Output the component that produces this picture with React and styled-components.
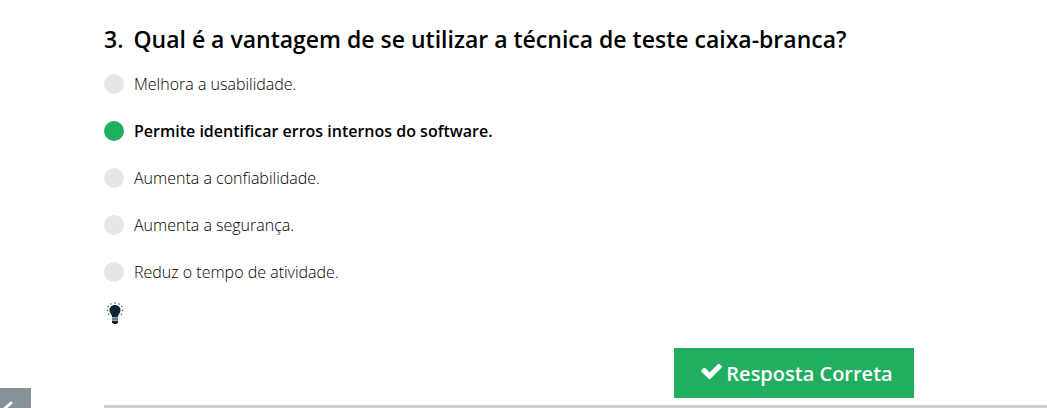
import React, { useState } from "react";
import styled, { createGlobalStyle } from "styled-components";

const GlobalStyle = createGlobalStyle`
  * { box-sizing: border-box; }
  body {
    margin: 0;
    background: #fff;
    color: #000;
    font-family: "Open Sans", "Liberation Sans", sans-serif;
    overflow: hidden;
  }
`;

const Page = styled.main`
  padding: 23px 0 0 104px;
`;

const Question = styled.form`
  display: flex;
  flex-direction: column;
  padding-right: 133px;
`;

const Title = styled.h2`
  display: flex;
  gap: 10px;
  margin: 0 0 17px;
  font-size: 23px;
  line-height: 32px;
  font-weight: 600;
`;

const Options = styled.div`
  display: flex;
  flex-direction: column;
  gap: 23px;
`;

const Option = styled.label`
  display: flex;
  align-items: center;
  gap: 10px;
  font-size: 16px;
  line-height: 24px;
  font-weight: ${(p) => (p.$selected ? 600 : 300)};
  color: #000;
`;

const Radio = styled.input`
  appearance: none;
  flex: none;
  width: 20px;
  height: 20px;
  margin: 0;
  border-radius: 50%;
  background: #e4e8e9;

  &:checked {
    background: #22ae60;
  }
`;

const HintButton = styled.button`
  display: flex;
  align-self: flex-start;
  margin: 17px 0 0;
  padding: 0;
  border: 0;
  background: none;
  color: #0b2535;
`;

const AnswerButton = styled.button`
  display: flex;
  align-items: center;
  justify-content: center;
  align-self: flex-end;
  gap: 4px;
  width: 240px;
  height: 50px;
  margin: 23px 0 0;
  padding: 0 0 0 6px;
  border: 0;
  background: #22ae60;
  color: #fff;
  font-family: inherit;
  font-size: 20px;
  font-weight: 600;
`;

const Divider = styled.hr`
  height: 3px;
  margin: 7px 0 0;
  border: 0;
  background: #d0d0d0;
`;

const PreviousTab = styled.button`
  position: fixed;
  left: 0;
  bottom: -20px;
  display: flex;
  align-items: center;
  width: 31px;
  height: 40px;
  padding: 0;
  border: 0;
  background: #869297;
  color: #fff;
`;

const options = [
  "Melhora a usabilidade.",
  "Permite identificar erros internos do software.",
  "Aumenta a confiabilidade.",
  "Aumenta a segurança.",
  "Reduz o tempo de atividade.",
];

function BulbIcon() {
  return (
    <svg width="22" height="24" viewBox="0 0 22 24" aria-hidden="true">
      <path
        fill="currentColor"
        d="M11 4c-3.300 0-5.500 2.400-5.500 5.300 0 3 2.500 4 2.700 6.700h5.600c.2-2.700 2.700-3.700 2.700-6.700C16.500 6.400 14.300 4 11 4Z"
      />
      <path fill="#9aa4aa" d="M8 16h6v4H8Z" />
      <path stroke="currentColor" strokeWidth=".6" d="M8 18h6" />
      <path fill="currentColor" d="M8 20h6v1.500L12.500 23h-3L8 21.500Z" />
      <g fill="currentColor" opacity=".75">
        <circle cx="11" cy="2" r=".8" />
        <circle cx="7" cy="3" r=".8" />
        <circle cx="15" cy="3" r=".8" />
        <circle cx="4.200" cy="5.500" r=".8" />
        <circle cx="17.800" cy="5.500" r=".8" />
        <circle cx="3.500" cy="9.500" r=".8" />
        <circle cx="18.500" cy="9.500" r=".8" />
        <circle cx="4.500" cy="13.200" r=".8" />
        <circle cx="17.500" cy="13.200" r=".8" />
      </g>
    </svg>
  );
}

function CheckIcon() {
  return (
    <svg width="21" height="20" viewBox="0 0 21 20" aria-hidden="true">
      <path
        fill="currentColor"
        d="M20.700 4.500 9.300 15.900a1 1 0 0 1-1.400 0L.5 8.700a1 1 0 0 1 0-1.400l2.200-2.200a1 1 0 0 1 1.400 0l4.500 4.500L17 .9a1 1 0 0 1 1.400 0l2.300 2.200a1 1 0 0 1 0 1.400Z"
      />
    </svg>
  );
}

function ChevronIcon() {
  return (
    <svg width="16" height="24" viewBox="0 0 16 24" aria-hidden="true">
      <path
        d="M11 7 2 15l9 8"
        fill="none"
        stroke="currentColor"
        strokeWidth="3"
        strokeLinecap="round"
        strokeLinejoin="round"
      />
    </svg>
  );
}

export default function App() {
  const [selected, setSelected] = useState(1);

  return (
    <>
      <GlobalStyle />
      <Page>
        <Question onSubmit={(e) => e.preventDefault()}>
          <Title id="question">
            <span>3.</span>
            <span>Qual é a vantagem de se utilizar a técnica de teste caixa-branca?</span>
          </Title>
          <Options role="radiogroup" aria-labelledby="question">
            {options.map((text, i) => (
              <Option key={text} $selected={i === selected}>
                <Radio
                  type="radio"
                  name="answer"
                  checked={i === selected}
                  onChange={() => setSelected(i)}
                />
                {text}
              </Option>
            ))}
          </Options>
          <HintButton type="button" aria-label="Dica">
            <BulbIcon />
          </HintButton>
          <AnswerButton type="submit">
            <CheckIcon />
            Resposta Correta
          </AnswerButton>
        </Question>
        <Divider />
      </Page>
      <PreviousTab type="button" aria-label="Anterior">
        <ChevronIcon />
      </PreviousTab>
    </>
  );
}
